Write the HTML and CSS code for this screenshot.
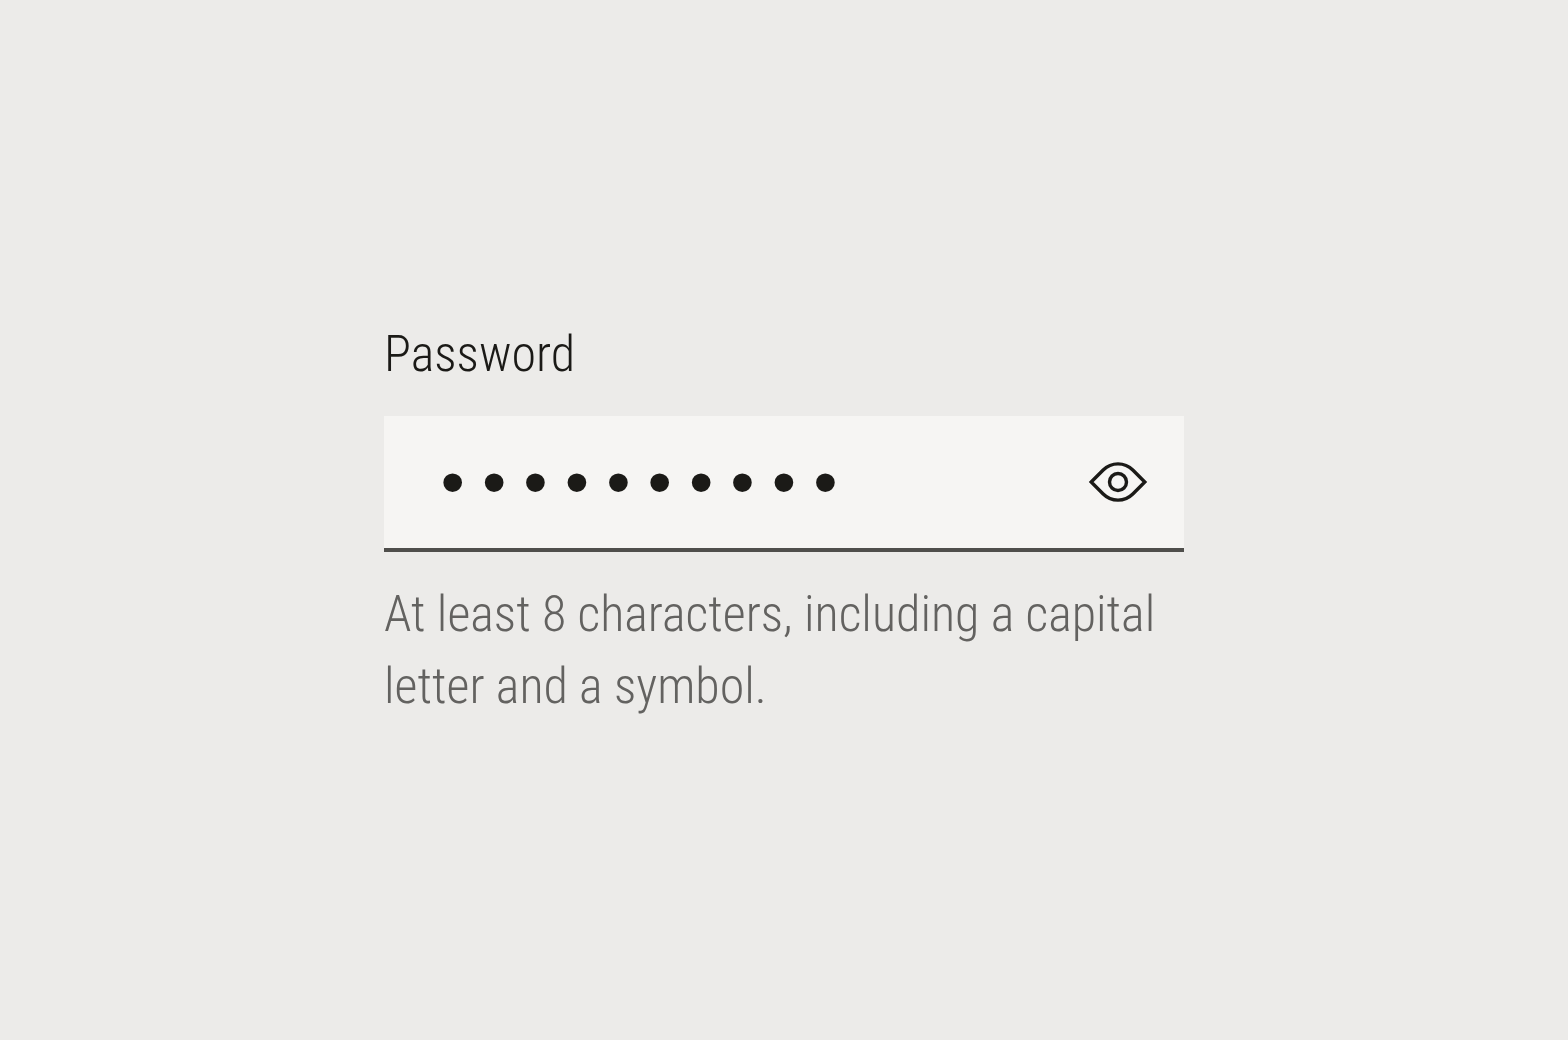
FILE: index.html
```html
<!DOCTYPE html>
<html lang="en">
<head>
  <meta charset="UTF-8">
  <meta name="viewport" content="width=device-width, initial-scale=1.0">
  <title>Password</title>
  <link rel="stylesheet" href="styles.css">
</head>
<body>
  <form class="field">
    <label class="label" for="password">Password</label>
    <div class="control">
      <input class="input" type="password" id="password" value="Secret#123" autocomplete="off" aria-describedby="hint">
      <button class="toggle" type="button" aria-label="Show password">
        <svg class="eye" viewBox="0 0 64 64" fill="none" stroke="currentColor" stroke-width="3.4" aria-hidden="true">
          <path d="M5.2 32 L17.2 20 A21 21 0 0 1 46.8 20 L58.8 32 L46.8 44 A21 21 0 0 1 17.2 44 Z"/>
          <circle cx="32" cy="32" r="8.5"/>
        </svg>
      </button>
    </div>
    <p class="hint" id="hint">At least 8 characters, including a capital letter and a symbol.</p>
  </form>

  <script>
    const input = document.getElementById('password');
    const toggle = document.querySelector('.toggle');

    toggle.addEventListener('click', () => {
      const hidden = input.type === 'password';
      input.type = hidden ? 'text' : 'password';
      toggle.setAttribute('aria-label', hidden ? 'Hide password' : 'Show password');
    });
  </script>
</body>
</html>
```
FILE: styles.css
```css
* {
  box-sizing: border-box;
}
body {
  margin: 0;
  min-height: 100vh;
  display: flex;
  align-items: center;
  justify-content: center;
  background: #ecebe9;
  color: #1b1a17;
  font-family: "Roboto Condensed", Roboto, sans-serif;
  font-size: 50px;
  font-weight: 350;
  line-height: 72px;
}
.field {
  display: flex;
  flex-direction: column;
  gap: 26px;
  width: 100%;
  max-width: 800px;
}
.control {
  display: flex;
  align-items: center;
  padding: 26px 34px 26px 48px;
  background: #f6f5f3;
  border-bottom: 4px solid #4f4e4b;
}
.input {
  flex: 1;
  min-width: 0;
  height: 80px;
  padding: 10px 0 0;
  border: none;
  outline: none;
  background: transparent;
  color: inherit;
  font-family: "Liberation Mono", monospace;
  font-size: 69px;
}
.toggle {
  display: flex;
  padding: 0;
  border: none;
  background: transparent;
  color: inherit;
  cursor: pointer;
}
.eye {
  width: 64px;
  height: 64px;
}
.hint {
  margin: 0;
  color: #636260;
}
```
